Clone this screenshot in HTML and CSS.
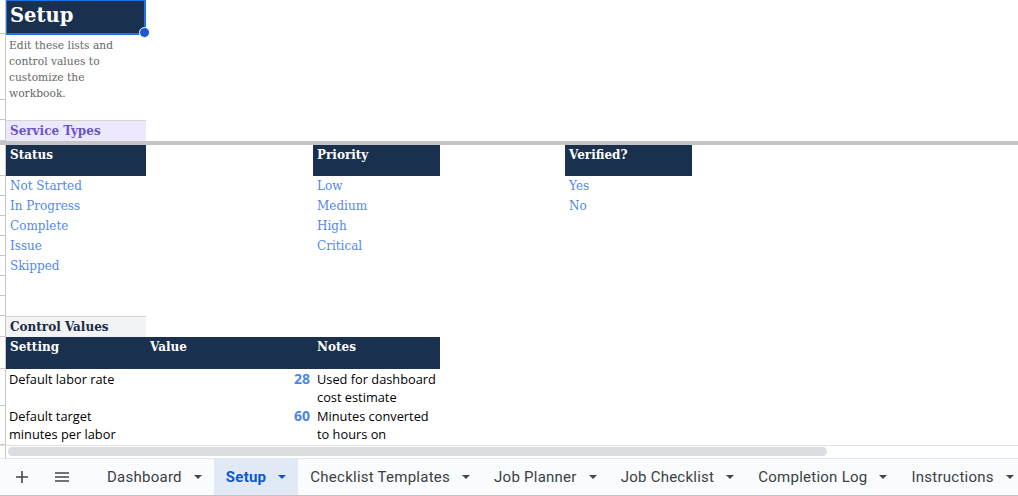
FILE: index.html
```html
<!DOCTYPE html>
<html lang="en">
<head>
    <meta charset="UTF-8">
    <meta name="viewport" content="width=device-width, initial-scale=1.0">
    <title>Setup</title>
    <link rel="stylesheet" href="styles.css">
</head>
<body>
    <div class="sheet">
        <div class="row r-title">
            <div class="gut"></div>
            <div class="cell col-a title">Setup<span class="handle"></span></div>
        </div>
        <div class="row r-desc">
            <div class="gut"></div>
            <div class="cell col-a desc">Edit these lists and control values to customize the workbook.</div>
        </div>
        <div class="row r-20">
            <div class="gut"></div>
        </div>
        <div class="row r-21">
            <div class="gut"></div>
            <div class="cell col-a section purple">Service Types</div>
        </div>
        <div class="freeze"></div>
        <div class="row r-head">
            <div class="gut"></div>
            <div class="cell col-a head">Status</div>
            <div class="cell col-b"></div>
            <div class="cell col-c head">Priority</div>
            <div class="cell col-d"></div>
            <div class="cell col-e head">Verified?</div>
        </div>
        <div class="row r-20">
            <div class="gut"></div>
            <div class="cell col-a item">Not Started</div>
            <div class="cell col-b"></div>
            <div class="cell col-c item">Low</div>
            <div class="cell col-d"></div>
            <div class="cell col-e item">Yes</div>
        </div>
        <div class="row r-20">
            <div class="gut"></div>
            <div class="cell col-a item">In Progress</div>
            <div class="cell col-b"></div>
            <div class="cell col-c item">Medium</div>
            <div class="cell col-d"></div>
            <div class="cell col-e item">No</div>
        </div>
        <div class="row r-20">
            <div class="gut"></div>
            <div class="cell col-a item">Complete</div>
            <div class="cell col-b"></div>
            <div class="cell col-c item">High</div>
        </div>
        <div class="row r-20">
            <div class="gut"></div>
            <div class="cell col-a item">Issue</div>
            <div class="cell col-b"></div>
            <div class="cell col-c item">Critical</div>
        </div>
        <div class="row r-20">
            <div class="gut"></div>
            <div class="cell col-a item">Skipped</div>
        </div>
        <div class="row r-20">
            <div class="gut"></div>
        </div>
        <div class="row r-20">
            <div class="gut"></div>
        </div>
        <div class="row r-21">
            <div class="gut"></div>
            <div class="cell col-a section grey">Control Values</div>
        </div>
        <div class="row r-head2">
            <div class="gut"></div>
            <div class="cell col-a head">Setting</div>
            <div class="cell col-b head">Value</div>
            <div class="cell col-c head">Notes</div>
        </div>
        <div class="row r-val1">
            <div class="gut"></div>
            <div class="cell col-a plain">Default labor rate</div>
            <div class="cell col-b num">28</div>
            <div class="cell col-c plain">Used for dashboard cost estimate</div>
        </div>
        <div class="row r-val2">
            <div class="gut"></div>
            <div class="cell col-a plain">Default target minutes per labor</div>
            <div class="cell col-b num">60</div>
            <div class="cell col-c plain">Minutes converted to hours on</div>
        </div>
        <div class="hscroll">
            <div class="gut"></div>
            <div class="track"><div class="thumb"></div></div>
        </div>
    </div>

    <div class="tabbar">
        <div class="tab-icon">
            <svg width="14" height="14" viewBox="0 0 14 14"><path d="M7 1v12M1 7h12" stroke="#444746" stroke-width="1.6" fill="none"/></svg>
        </div>
        <div class="tab-icon menu">
            <svg width="16" height="12" viewBox="0 0 16 12"><path d="M1 2h14M1 6h14M1 10h14" stroke="#444746" stroke-width="1.6" fill="none"/></svg>
        </div>
        <div class="tab">Dashboard<span class="caret"></span></div>
        <div class="tab active">Setup<span class="caret"></span></div>
        <div class="tab">Checklist Templates<span class="caret"></span></div>
        <div class="tab">Job Planner<span class="caret"></span></div>
        <div class="tab">Job Checklist<span class="caret"></span></div>
        <div class="tab">Completion Log<span class="caret"></span></div>
        <div class="tab">Instructions<span class="caret"></span></div>
    </div>
</body>
</html>
```

FILE: styles.css
```css
body {
    margin: 0;
    padding: 0;
    background-color: white;
    font-family: "DejaVu Serif", serif;
    overflow: hidden;
}

.sheet {
    height: 458px;
    overflow: hidden;
}

.row {
    display: flex;
    box-sizing: border-box;
}

.r-title { height: 34px; }
.r-desc { height: 66px; }
.r-20 { height: 20px; }
.r-21 { height: 21px; }
.r-head { height: 31px; }
.r-head2 { height: 32px; }
.r-val1 { height: 37px; }
.r-val2 { height: 39px; }

.gut {
    width: 6px;
    flex-shrink: 0;
    box-sizing: border-box;
    border-right: 1px solid #c7c7c7;
    border-bottom: 1px solid #c7c7c7;
}

.cell {
    flex-shrink: 0;
    box-sizing: border-box;
    padding: 0 4px;
    overflow: hidden;
}

.col-a { width: 140px; }
.col-b { width: 167px; }
.col-c { width: 127px; }
.col-d { width: 125px; }
.col-e { width: 127px; }

.title {
    position: relative;
    overflow: visible;
    background-color: #19304f;
    color: white;
    font-weight: bold;
    font-size: 19.5px;
    line-height: 29px;
    padding: 0 3px;
    border: 2px solid #1a73e8;
    border-left-width: 1px;
    height: 36px;
    margin-top: -1px;
    margin-bottom: -1px;
}

.handle {
    position: absolute;
    right: -6px;
    bottom: -5px;
    width: 9px;
    height: 9px;
    border-radius: 50%;
    background-color: #1a57d0;
    border: 1px solid white;
}

.desc {
    color: #666666;
    font-size: 10.7px;
    line-height: 16px;
    padding: 4px 3px 0;
}

.section {
    font-weight: bold;
    font-size: 12px;
    line-height: 20px;
    border-top: 1px solid #d4d4d4;
}

.purple {
    background-color: #ede8fb;
    color: #6a55c8;
}

.grey {
    background-color: #f1f3f4;
    color: #1c2a44;
}

.freeze {
    height: 4px;
    background-color: #c4c4c4;
}

.head {
    background-color: #19304f;
    color: white;
    font-weight: bold;
    font-size: 12px;
    line-height: 18px;
    padding-top: 1px;
}

.item {
    color: #5287f0;
    font-size: 12px;
    line-height: 21px;
}

.plain {
    font-family: "Open Sans", sans-serif;
    font-size: 12.8px;
    line-height: 18px;
    color: #000;
    padding: 1px 3px 0;
}

.col-c.plain {
    padding-left: 4px;
}

.num {
    font-family: "Open Sans", sans-serif;
    font-weight: bold;
    font-size: 14px;
    line-height: 18px;
    color: #4a86e8;
    text-align: right;
    padding: 1px 3px 0;
}

.hscroll {
    display: flex;
    height: 13px;
    border-top: 1px solid #e1e1e1;
    box-sizing: border-box;
}

.hscroll .gut {
    border-bottom: none;
}

.track {
    flex: 1;
    padding: 1px 2px;
}

.thumb {
    width: 819px;
    height: 9px;
    border-radius: 5px;
    background-color: #dadce0;
}

.tabbar {
    height: 38px;
    display: flex;
    align-items: stretch;
    overflow: hidden;
    background-color: #f9fbfd;
    border-top: 1px solid #e6e8eb;
    border-bottom: 1px solid #c4c4c4;
    box-sizing: border-box;
    padding-left: 2px;
    font-family: Roboto, "Open Sans", sans-serif;
    font-size: 15px;
    color: #3c4043;
    white-space: nowrap;
}

.tab-icon {
    width: 40px;
    flex-shrink: 0;
    display: flex;
    align-items: center;
    justify-content: center;
}

.tab-icon.menu {
    margin-right: 13px;
}

.tab {
    flex-shrink: 0;
    display: flex;
    align-items: center;
    padding: 0 12px;
    letter-spacing: 0.25px;
}

.tab.active {
    background-color: #e1e9f7;
    color: #0b57d0;
    font-weight: bold;
}

.caret {
    display: inline-block;
    margin-left: 12px;
    width: 0;
    height: 0;
    border-left: 4px solid transparent;
    border-right: 4px solid transparent;
    border-top: 4px solid #444746;
}

.tab.active .caret {
    border-top-color: #0b57d0;
}
```
